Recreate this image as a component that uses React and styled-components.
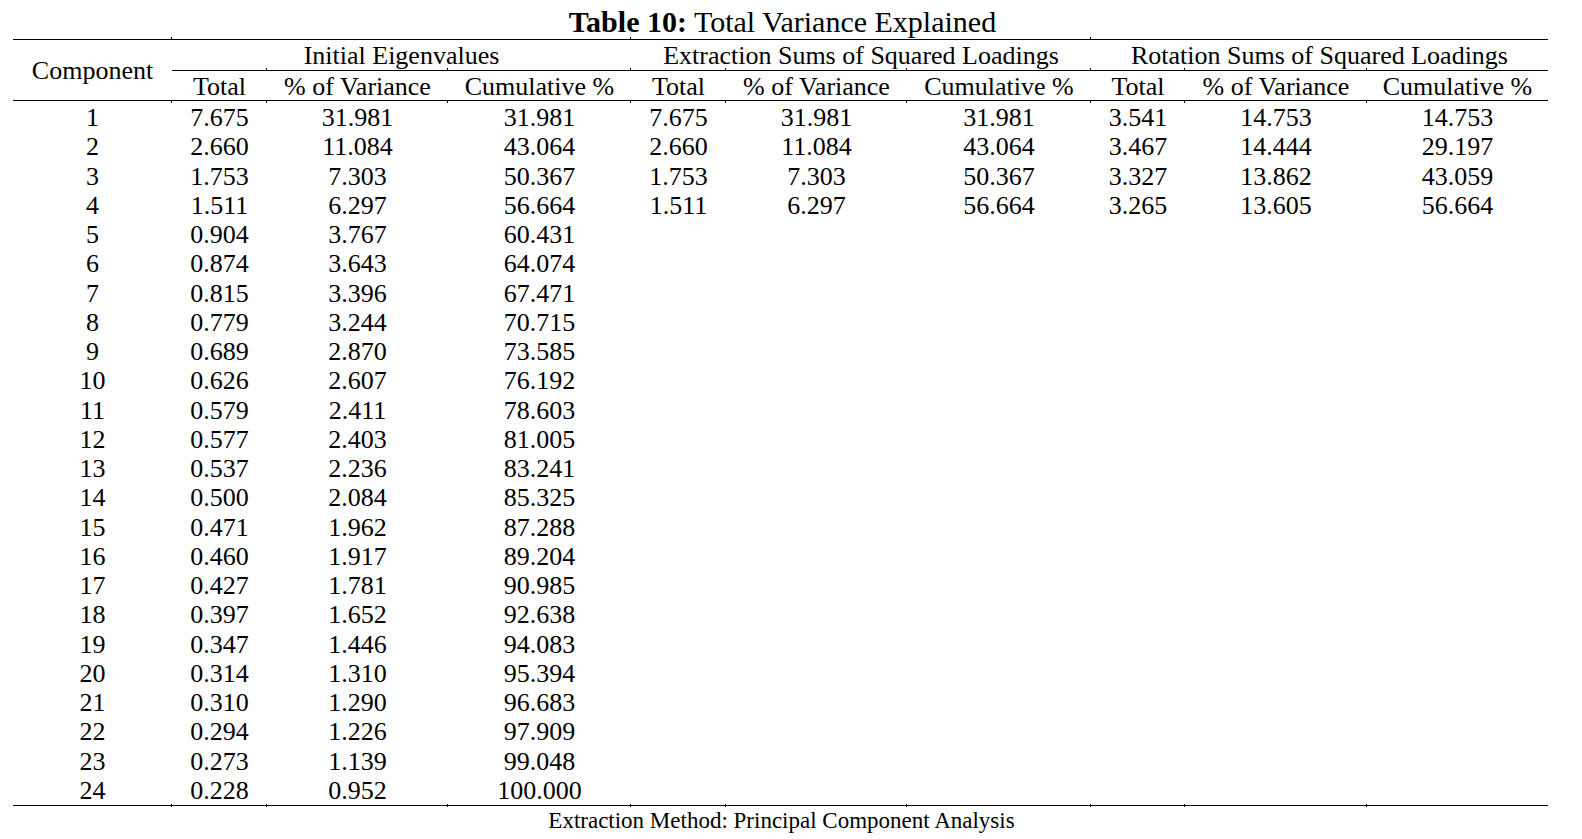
import React from "react";
import styled, { createGlobalStyle, css } from "styled-components";

const GlobalStyle = createGlobalStyle`
  html, body {
    margin: 0;
    padding: 0;
    background: #ffffff;
  }
  body {
    font-family: "Liberation Serif", "Times New Roman", serif;
    color: #000;
  }
`;

const COLS = "159px 95px 181px 183px 95px 181px 184px 94px 182px 181px";

const Page = styled.div`
  padding: 6px 0 0 13px;
  width: 1535px;
`;

const Title = styled.div`
  font-size: 30px;
  line-height: 32px;
  text-align: center;
  margin-bottom: 1px;
  white-space: nowrap;
  padding-left: 4px;
`;

const Bold = styled.span`
  font-weight: bold;
`;

const Table = styled.div`
  border-top: 1px solid #000;
  border-bottom: 1px solid #000;
  font-size: 26px;
`;

const Head = styled.div`
  display: grid;
  grid-template-columns: ${COLS};
  grid-template-rows: 31px 30px;
`;

const Body = styled.div`
  display: grid;
  grid-template-columns: ${COLS};
  grid-auto-rows: 29.25px;
  padding-top: 2px;
`;

const tickStyle = css`
  content: "";
  position: absolute;
  left: -1px;
  width: 1px;
  height: 3px;
  background: #000;
`;

const Cell = styled.div`
  position: relative;
  box-sizing: border-box;
  text-align: center;
  white-space: nowrap;
  ${(p) =>
    p.$line &&
    css`
      border-bottom: 1px solid #000;
    `}
  ${(p) =>
    p.$tickTop &&
    css`
      &::before {
        ${tickStyle};
        top: -3px;
      }
    `}
  ${(p) =>
    p.$tickBottom &&
    css`
      &::after {
        ${tickStyle};
        bottom: -2px;
      }
    `}
`;

const ComponentHead = styled(Cell)`
  grid-row: 1 / span 2;
  grid-column: 1;
  line-height: 30px;
  display: flex;
  align-items: center;
  justify-content: center;
  padding-top: 1px;
`;

const GroupHead = styled(Cell)`
  grid-column: span 3;
  line-height: 30px;
  padding-top: 1px;
`;

const SubHead = styled(Cell)`
  line-height: 29px;
  padding-top: 1px;
`;

const DataCell = styled(Cell)`
  line-height: 29.25px;
`;

const Footnote = styled.div`
  font-size: 23px;
  line-height: 26px;
  text-align: center;
  padding: 2px 0 0 2px;
`;

const initial = [
  ["7.675", "31.981", "31.981"],
  ["2.660", "11.084", "43.064"],
  ["1.753", "7.303", "50.367"],
  ["1.511", "6.297", "56.664"],
  ["0.904", "3.767", "60.431"],
  ["0.874", "3.643", "64.074"],
  ["0.815", "3.396", "67.471"],
  ["0.779", "3.244", "70.715"],
  ["0.689", "2.870", "73.585"],
  ["0.626", "2.607", "76.192"],
  ["0.579", "2.411", "78.603"],
  ["0.577", "2.403", "81.005"],
  ["0.537", "2.236", "83.241"],
  ["0.500", "2.084", "85.325"],
  ["0.471", "1.962", "87.288"],
  ["0.460", "1.917", "89.204"],
  ["0.427", "1.781", "90.985"],
  ["0.397", "1.652", "92.638"],
  ["0.347", "1.446", "94.083"],
  ["0.314", "1.310", "95.394"],
  ["0.310", "1.290", "96.683"],
  ["0.294", "1.226", "97.909"],
  ["0.273", "1.139", "99.048"],
  ["0.228", "0.952", "100.000"],
];

const rotation = [
  ["3.541", "14.753", "14.753"],
  ["3.467", "14.444", "29.197"],
  ["3.327", "13.862", "43.059"],
  ["3.265", "13.605", "56.664"],
];

const groups = [
  "Initial Eigenvalues",
  "Extraction Sums of Squared Loadings",
  "Rotation Sums of Squared Loadings",
];

const subs = ["Total", "% of Variance", "Cumulative %"];

export default function App() {
  const rows = initial.map((init, i) => {
    const extraction = i < 4 ? init : ["", "", ""];
    const rot = i < 4 ? rotation[i] : ["", "", ""];
    return [String(i + 1), ...init, ...extraction, ...rot];
  });
  const last = rows.length - 1;

  return (
    <>
      <GlobalStyle />
      <Page>
        <Title>
          <Bold>Table 10:</Bold> Total Variance Explained
        </Title>
        <Table>
          <Head>
            <ComponentHead $line>Component</ComponentHead>
            {groups.map((g) => (
              <GroupHead key={g} $line $tickTop>
                {g}
              </GroupHead>
            ))}
            {groups.map((g, gi) =>
              subs.map((s, si) => (
                <SubHead key={g + s} $line $tickTop={!(gi === 0 && si === 0)}>
                  {s}
                </SubHead>
              ))
            )}
          </Head>
          <Body>
            {rows.map((row, ri) =>
              row.map((v, ci) => (
                <DataCell
                  key={ri + "-" + ci}
                  $tickTop={ri === 0 && ci > 0}
                  $tickBottom={ri === last && ci > 0}
                >
                  {v}
                </DataCell>
              ))
            )}
          </Body>
        </Table>
        <Footnote>Extraction Method: Principal Component Analysis</Footnote>
      </Page>
    </>
  );
}
